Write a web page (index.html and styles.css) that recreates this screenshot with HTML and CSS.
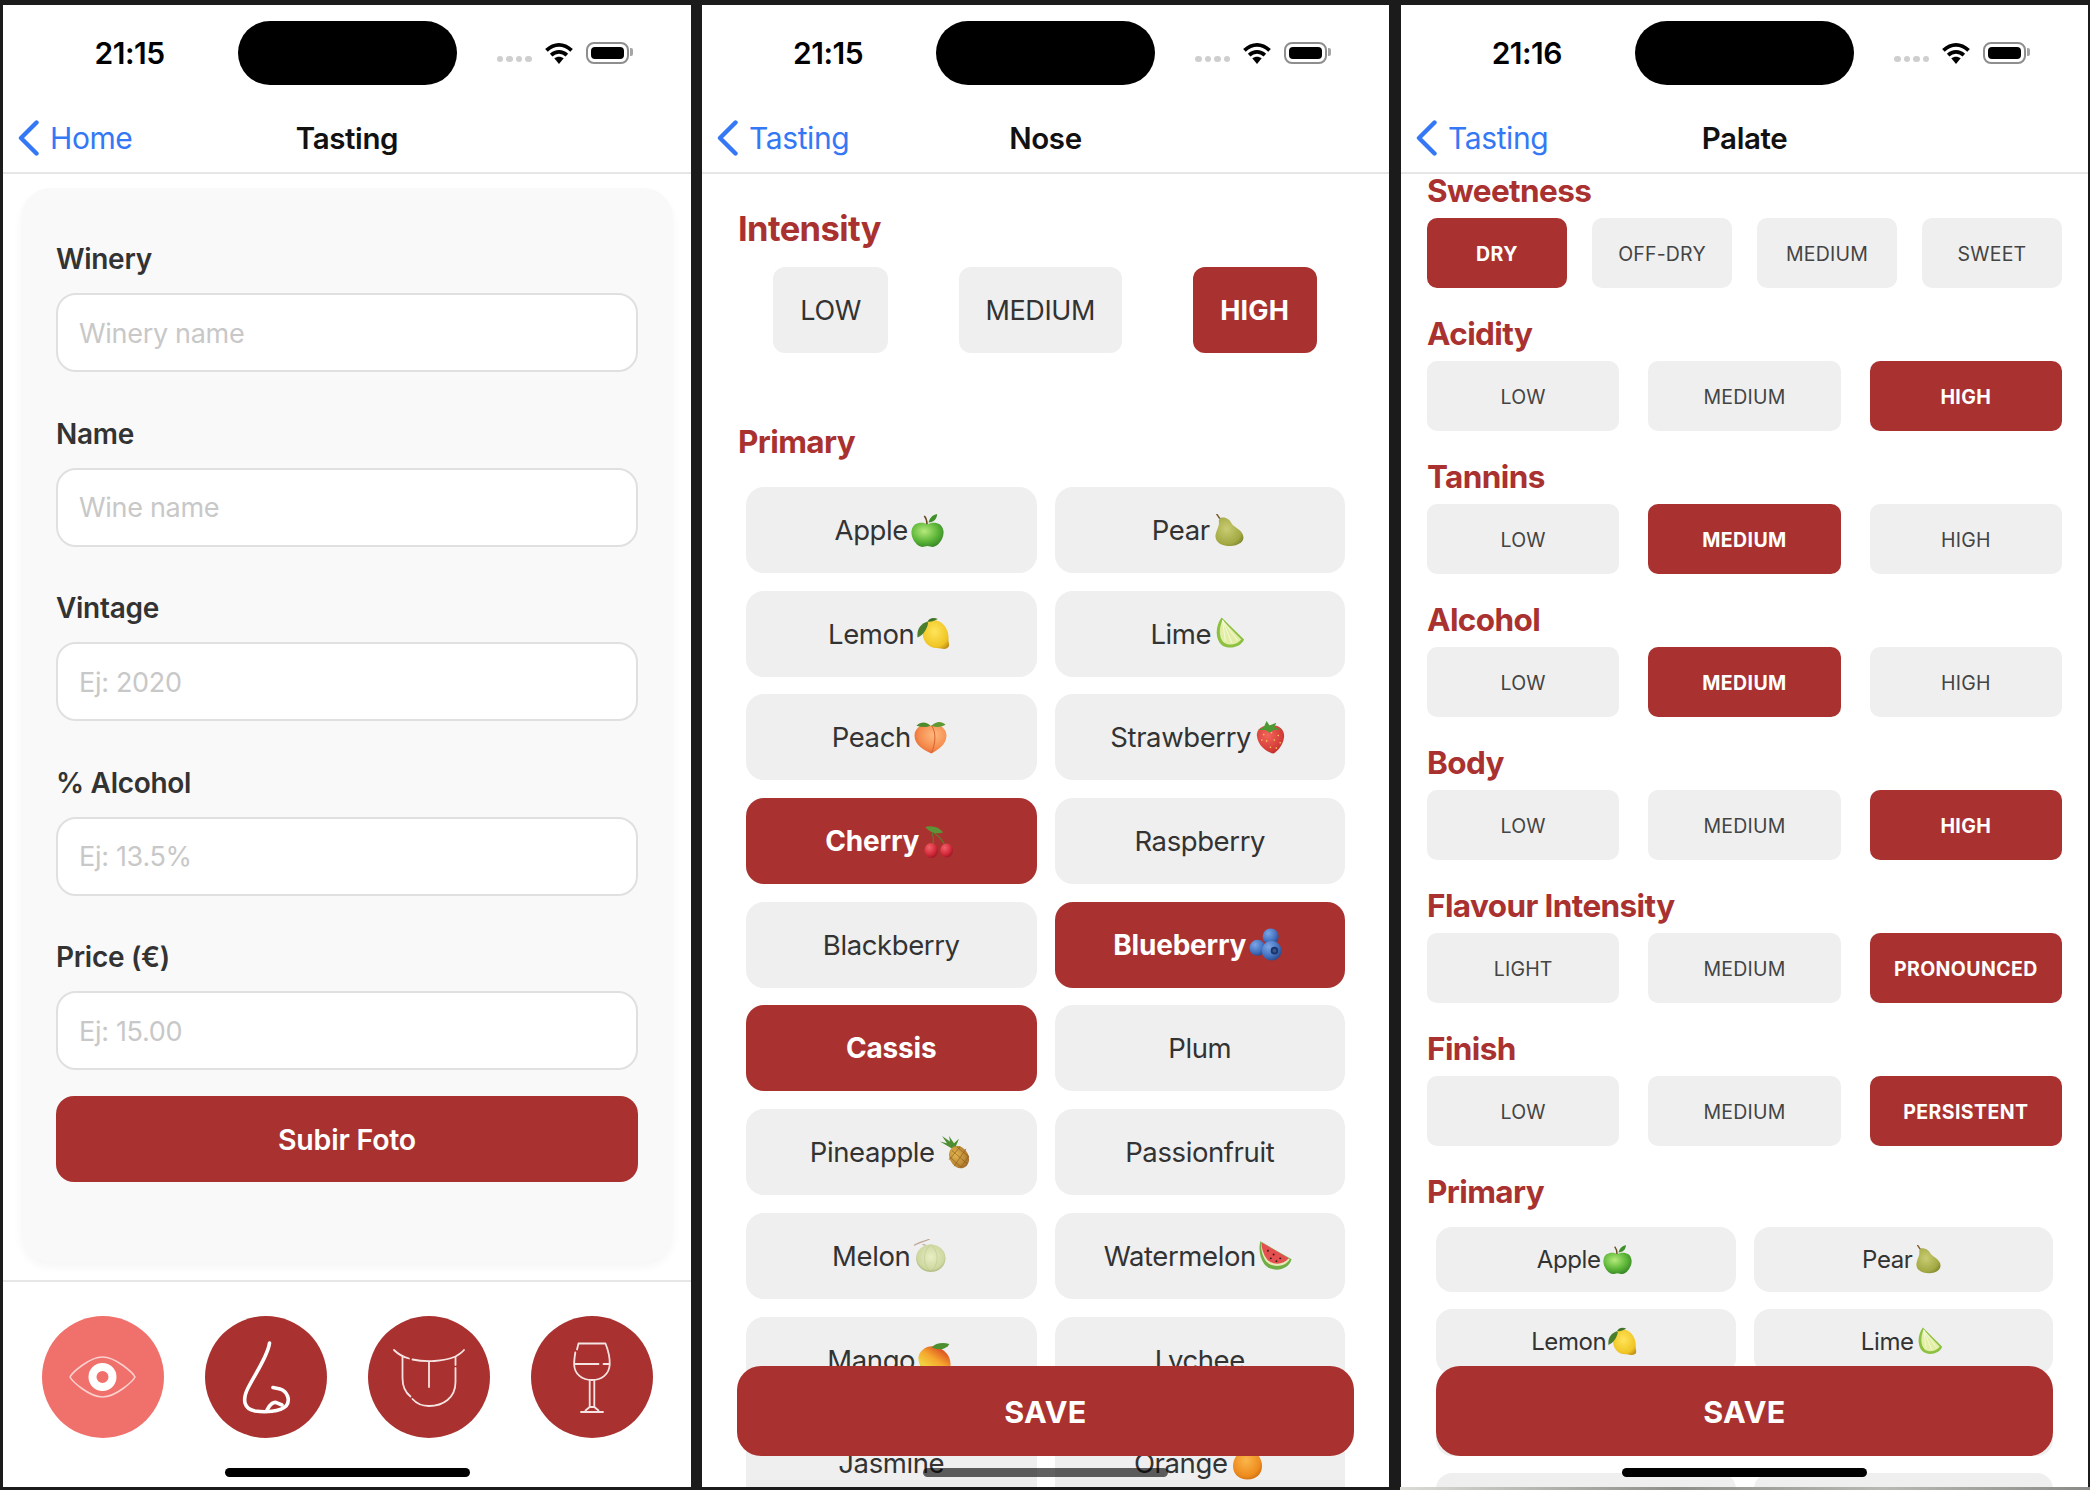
FILE: index.html
```html
<!DOCTYPE html>
<html lang="en">
<head>
<meta charset="utf-8">
<title>Wine tasting</title>
<link rel="stylesheet" href="styles.css">
</head>
<body>
<svg class="defs" aria-hidden="true">
  <defs>
    <radialGradient id="gApple" cx=".4" cy=".35" r=".75"><stop offset="0" stop-color="#b7ea7c"/><stop offset=".55" stop-color="#5fb83a"/><stop offset="1" stop-color="#2f7d22"/></radialGradient>
    <radialGradient id="gPear" cx=".4" cy=".4" r=".75"><stop offset="0" stop-color="#c9cc72"/><stop offset=".7" stop-color="#a3a944"/><stop offset="1" stop-color="#757d24"/></radialGradient>
    <radialGradient id="gLemon" cx=".45" cy=".4" r=".7"><stop offset="0" stop-color="#ffe45a"/><stop offset=".75" stop-color="#f0c524"/><stop offset="1" stop-color="#c4921a"/></radialGradient>
    <radialGradient id="gPeach" cx=".6" cy=".35" r=".8"><stop offset="0" stop-color="#ffb97f"/><stop offset=".6" stop-color="#f58a4c"/><stop offset="1" stop-color="#d9532a"/></radialGradient>
    <radialGradient id="gStraw" cx=".4" cy=".35" r=".8"><stop offset="0" stop-color="#f2655a"/><stop offset=".7" stop-color="#d23a36"/><stop offset="1" stop-color="#a5211f"/></radialGradient>
    <radialGradient id="gCherry" cx=".35" cy=".3" r=".8"><stop offset="0" stop-color="#f2606a"/><stop offset=".6" stop-color="#d32a3a"/><stop offset="1" stop-color="#8f1322"/></radialGradient>
    <radialGradient id="gBlue" cx=".35" cy=".3" r=".8"><stop offset="0" stop-color="#7ba6e6"/><stop offset=".6" stop-color="#4472c0"/><stop offset="1" stop-color="#24427f"/></radialGradient>
    <radialGradient id="gPine" cx=".4" cy=".35" r=".8"><stop offset="0" stop-color="#e4b64f"/><stop offset=".7" stop-color="#b5802f"/><stop offset="1" stop-color="#7a5019"/></radialGradient>
    <radialGradient id="gMelon" cx=".5" cy=".45" r=".6"><stop offset="0" stop-color="#e9eec4"/><stop offset=".75" stop-color="#ced8a0"/><stop offset="1" stop-color="#9aa96e"/></radialGradient>
    <linearGradient id="gMango" x1=".85" y1=".1" x2=".2" y2=".95"><stop offset="0" stop-color="#d8421f"/><stop offset=".45" stop-color="#f5a62e"/><stop offset=".8" stop-color="#f2d23e"/><stop offset="1" stop-color="#a2b23a"/></linearGradient>
    <radialGradient id="gOrange" cx=".45" cy=".4" r=".7"><stop offset="0" stop-color="#fbb64a"/><stop offset=".7" stop-color="#ee8c1f"/><stop offset="1" stop-color="#c2620e"/></radialGradient>

    <symbol id="e-apple" viewBox="2.500 0 31 35" preserveAspectRatio="none">
      <path d="M18 11C22 8 32 8 33 18 34 27 27 35 23 35 21 35 20 34 18 34 16 34 15 35 13 35 9 35 2 27 3 18 4 8 14 8 18 11Z" fill="url(#gApple)"/>
      <path d="M17.500 11C17.500 7 16.500 4 15 2" fill="none" stroke="#6a4a20" stroke-width="1.500"/>
      <path d="M19 9C20 4 23 1 27 0 27 5 24 9 19 9Z" fill="#3f8f2a"/>
    </symbol>
    <symbol id="e-pear" viewBox="6.500 1 27 35" preserveAspectRatio="none">
      <path d="M12 5C17 4 20 7 22 11 24 15 33 18 33 26 33 32 26 35 21 35 13 35 6 31 7 23 8 17 11 13 10 9 10 7 11 5 12 5Z" fill="url(#gPear)"/>
      <path d="M11 6 8 1" fill="none" stroke="#7d5a2a" stroke-width="1.500"/>
    </symbol>
    <symbol id="e-lemon" viewBox="3.500 1 31 34" preserveAspectRatio="none">
      <path d="M20 4C28 5 34 14 33 24 33 28 35 31 32 33 29 35 26 33 22 33 13 33 8 24 9 16 10 9 14 4 20 4Z" fill="url(#gLemon)"/>
      <path d="M13 6C7 8 3 14 4 22 9 20 13 14 14 7Z" fill="#4a7d2c"/>
      <path d="M13 6C15 2 19 1 23 3 20 5 16 6 13 6Z" fill="#3f7326"/>
    </symbol>
    <symbol id="e-lime" viewBox="4 0.500 31 36" preserveAspectRatio="none">
      <path d="M10 1 34 25C31 33 18 37 10 31 3 25 3 10 10 1Z" fill="#8cc040"/>
      <path d="M11 4 31 25C27 30 18 33 12 28 7 23 7 12 11 4Z" fill="#e2eea6"/>
      <path d="M11 4 14 27M11 4 21 29M11 4 27 26" fill="none" stroke="#f6fadb" stroke-width="1"/>
    </symbol>
    <symbol id="e-peach" viewBox="1.500 1 33 35.500" preserveAspectRatio="none">
      <path d="M18 6C24 3 34 7 34 17 34 27 24 33 19 36 12 33 2 27 2 17 2 7 12 3 18 6Z" fill="url(#gPeach)"/>
      <path d="M19 6C24 13 23 26 19 35" fill="none" stroke="#d2602f" stroke-width="1"/>
      <path d="M18 6C13 1 8 2 4 6 9 8 14 8 18 6Z" fill="#4f8a2c"/>
      <path d="M19 6C24 1 29 1 33 5 28 8 23 8 19 6Z" fill="#5e9a34"/>
    </symbol>
    <symbol id="e-strawberry" viewBox="4 0 30 36.500" preserveAspectRatio="none">
      <path d="M18 5C27 3 34 9 33 18 32 27 26 34 22 36 15 35 6 27 5 17 4 10 10 4 18 5Z" fill="url(#gStraw)"/>
      <g fill="#f2c85a"><circle cx="12" cy="15" r=".9"/><circle cx="20" cy="13" r=".9"/><circle cx="27" cy="16" r=".9"/><circle cx="15" cy="22" r=".9"/><circle cx="23" cy="21" r=".9"/><circle cx="29" cy="24" r=".9"/><circle cx="19" cy="29" r=".9"/><circle cx="25" cy="30" r=".9"/><circle cx="10" cy="21" r=".9"/></g>
      <path d="M6 10 12 7 15 0 18 5 25 2 23 7 30 9 22 10 18 13 14 10Z" fill="#4c9a34"/>
    </symbol>
    <symbol id="e-cherry" viewBox="0.500 0 34 35" preserveAspectRatio="none">
      <path d="M10 8C12 14 12 19 10 24M12 8C18 12 24 17 26 24" fill="none" stroke="#5f7d2c" stroke-width="1.300"/>
      <path d="M2 2C10 0 18 2 23 8 15 10 7 8 2 2Z" fill="#5d9438"/>
      <circle cx="9" cy="27" r="8" fill="url(#gCherry)"/>
      <circle cx="27" cy="27" r="7.500" fill="url(#gCherry)"/>
    </symbol>
    <symbol id="e-blueberry" viewBox="0 0 35 35">
      <circle cx="23" cy="9" r="8.500" fill="url(#gBlue)"/>
      <circle cx="9" cy="21" r="8.500" fill="url(#gBlue)"/>
      <circle cx="24" cy="24" r="10.500" fill="url(#gBlue)"/>
      <circle cx="27" cy="24" r="4" fill="#1d3568"/>
      <circle cx="27" cy="24" r="2" fill="#38578f"/>
    </symbol>
    <symbol id="e-pineapple" viewBox="3 0 29 36" preserveAspectRatio="none">
      <path d="M14 13 3 6 10 8 5 0 13 6 12 0 17 8 22 3 19 11 24 11 18 15Z" fill="#4f8d33"/>
      <ellipse cx="22" cy="23" rx="9.500" ry="12.500" transform="rotate(-22 22 23)" fill="url(#gPine)"/>
      <path d="M15 16 30 30M13 23 24 34M20 12 32 23M29 14 17 33M23 12 12 26M33 20 24 34" fill="none" stroke="#8a5c20" stroke-width=".7"/>
    </symbol>
    <symbol id="e-melon" viewBox="3 0 31.500 36" preserveAspectRatio="none">
      <ellipse cx="20" cy="21" rx="14" ry="15" fill="url(#gMelon)"/>
      <path d="M4 7C8 4 13 3 19 0M12 6C14 6 15 7 15 7" fill="none" stroke="#c0a896" stroke-width="1.300"/>
      <path d="M20 6C12 14 12 28 20 36M20 6C28 14 28 28 20 36" fill="none" stroke="#bcc78f" stroke-width=".6"/>
    </symbol>
    <symbol id="e-watermelon" viewBox="1.500 2 35 32">
      <path d="M3 3 36 22C33 34 15 37 7 27 2 20 1 10 3 3Z" fill="#6fae45"/>
      <path d="M4 4 34 22C30 30 16 32 9 24 5 19 3 10 4 4Z" fill="#e8e8b6"/>
      <path d="M4 4 33 21C28 28 16 29 10 22 6 17 4 10 4 4Z" fill="#e4504f"/>
      <g fill="#2a1c18"><circle cx="11" cy="13" r="1"/><circle cx="17" cy="17" r="1"/><circle cx="24" cy="21" r="1"/><circle cx="14" cy="21" r="1"/><circle cx="20" cy="24" r="1"/></g>
    </symbol>
    <symbol id="e-mango" viewBox="4.500 0 30 36" preserveAspectRatio="none">
      <path d="M20 4C29 6 35 15 34 25 33 32 27 36 21 35 11 34 4 25 5 15 6 8 13 2 20 4Z" fill="url(#gMango)"/>
      <path d="M17 5C20 0 27-1 33 1 31 6 24 9 17 5Z" fill="#4c8f30"/>
    </symbol>
    <symbol id="e-orange" viewBox="3 1.500 30 34" preserveAspectRatio="none">
      <path d="M18 2C27 5 33 13 33 21 33 29 27 35 18 35 9 35 3 29 3 21 3 13 9 5 18 2Z" fill="url(#gOrange)"/>
      <circle cx="18" cy="4" r="1.500" fill="#7a5a1a"/>
    </symbol>

    <symbol id="i-wifi" viewBox="0 0 28 21">
      <path d="M2 8C9.500 1 18.500 1 26 8M6.500 12.500C11 8.500 17 8.500 21.500 12.500" fill="none" stroke="#000" stroke-width="3.600"/>
      <path d="M9.500 15.500C12 13.500 16 13.500 18.500 15.500L14 21Z" fill="#000"/>
    </symbol>
    <symbol id="i-back" viewBox="0 0 21 36">
      <path d="M18.500 2.500 3 18 18.500 33.500" fill="none" stroke="#3478f6" stroke-width="4.400" stroke-linecap="round" stroke-linejoin="round"/>
    </symbol>
  </defs>
</svg>

<main class="screens">

  <section class="phone">
    <header class="status">
      <div class="status-left"><span class="time">21:15</span></div>
      <div class="island"></div>
      <div class="status-right">
        <span class="signal"><i></i><i></i><i></i><i></i></span>
        <svg class="wifi"><use href="#i-wifi"/></svg>
        <span class="battery"><span class="battery-fill"></span></span>
      </div>
    </header>
    <nav class="nav">
      <a class="back"><svg class="chevron"><use href="#i-back"/></svg>Home</a>
      <h1 class="title">Tasting</h1>
    </nav>
    <div class="card">
      <div class="field"><label class="field-label">Winery</label><input class="input" placeholder="Winery name"></div>
      <div class="field"><label class="field-label">Name</label><input class="input" placeholder="Wine name"></div>
      <div class="field"><label class="field-label">Vintage</label><input class="input" placeholder="Ej: 2020"></div>
      <div class="field"><label class="field-label">% Alcohol</label><input class="input" placeholder="Ej: 13.5%"></div>
      <div class="field field-last"><label class="field-label">Price (€)</label><input class="input" placeholder="Ej: 15.00"></div>
      <button class="upload">Subir Foto</button>
    </div>
    <footer class="tabs">
      <div class="tab tab-active">
        <svg viewBox="0 0 122 122" class="tab-icon">
          <path d="M28 61C30 57 47 41 60.500 41S91 57 93 61C91 65 74 81 60.500 81S30 65 28 61Z" fill="none" stroke="#fbd0cd" stroke-width="1.600"/>
          <circle cx="60.500" cy="61" r="10" fill="none" stroke="#fff" stroke-width="8"/>
        </svg>
      </div>
      <div class="tab">
        <svg viewBox="0 0 122 122" class="tab-icon">
          <path d="M64.500 27C63 40 50 58 43 72 37 84 39 93 50 95 60 96.500 75 96 81 90 86 84 82 75 75 73L68 71.500" fill="none" stroke="#fff" stroke-width="3.600" stroke-linecap="round"/>
          <path d="M62 94C65 88 69 85 72 87L77 89" fill="none" stroke="#fff" stroke-width="3.600" stroke-linecap="round"/>
        </svg>
      </div>
      <div class="tab">
        <svg viewBox="0 0 122 122" class="tab-icon">
          <g fill="none" stroke="#f6e4e2" stroke-width="1.800" stroke-linecap="round">
            <path d="M26 34C30 38 35 41 41 42.500"/>
            <path d="M44.500 43.500C58 46.500 75 45.500 87.500 40.500 91 38.500 94 36.500 96 34"/>
            <path d="M34.500 40.500V62C34.500 70 38 77 42.500 80.500"/>
            <path d="M44.500 83C48 87 54 90 61 90 75 90 87.500 82 87.500 66V52"/>
            <path d="M87.500 49V41"/>
            <path d="M61 46V71"/>
          </g>
        </svg>
      </div>
      <div class="tab">
        <svg viewBox="0 0 122 122" class="tab-icon">
          <g fill="none" stroke="#f6e4e2" stroke-width="1.800" stroke-linecap="round" stroke-linejoin="round">
            <path d="M46 33.500 47.500 27.500H74.500C77.500 35 79 43 78.700 49 78 58 71 64 61 64 51 64 43.500 58 43.200 49 43 45 43.600 41 44.300 36.500"/>
            <path d="M44.500 48H67.500M72.500 48H78"/>
            <path d="M58.700 64V91M63.300 64V91"/>
            <path d="M50 96H72M54.500 94.500 58.700 91H63.300L67.500 94.500"/>
          </g>
        </svg>
      </div>
    </footer>
    <div class="home-bar"></div>
  </section>

  <section class="phone">
    <header class="status">
      <div class="status-left"><span class="time">21:15</span></div>
      <div class="island"></div>
      <div class="status-right">
        <span class="signal"><i></i><i></i><i></i><i></i></span>
        <svg class="wifi"><use href="#i-wifi"/></svg>
        <span class="battery"><span class="battery-fill"></span></span>
      </div>
    </header>
    <nav class="nav">
      <a class="back"><svg class="chevron"><use href="#i-back"/></svg>Tasting</a>
      <h1 class="title">Nose</h1>
    </nav>
    <div class="nose">
      <h2 class="section section-intensity">Intensity</h2>
      <div class="intensity">
        <button class="level">LOW</button>
        <button class="level">MEDIUM</button>
        <button class="level on">HIGH</button>
      </div>
      <h2 class="section section-primary">Primary</h2>
      <div class="notes">
        <button class="note">Apple<svg class="emoji"><use href="#e-apple"/></svg></button>
        <button class="note">Pear<svg class="emoji emoji-slim"><use href="#e-pear"/></svg></button>
        <button class="note">Lemon<svg class="emoji"><use href="#e-lemon"/></svg></button>
        <button class="note">Lime<svg class="emoji emoji-slim"><use href="#e-lime"/></svg></button>
        <button class="note">Peach<svg class="emoji"><use href="#e-peach"/></svg></button>
        <button class="note">Strawberry<svg class="emoji emoji-slim"><use href="#e-strawberry"/></svg></button>
        <button class="note on">Cherry<svg class="emoji emoji-slim"><use href="#e-cherry"/></svg></button>
        <button class="note">Raspberry</button>
        <button class="note">Blackberry</button>
        <button class="note on">Blueberry<svg class="emoji"><use href="#e-blueberry"/></svg></button>
        <button class="note on">Cassis</button>
        <button class="note">Plum</button>
        <button class="note">Pineapple<svg class="emoji emoji-slim"><use href="#e-pineapple"/></svg></button>
        <button class="note">Passionfruit</button>
        <button class="note">Melon<svg class="emoji"><use href="#e-melon"/></svg></button>
        <button class="note">Watermelon<svg class="emoji"><use href="#e-watermelon"/></svg></button>
        <button class="note">Mango<svg class="emoji"><use href="#e-mango"/></svg></button>
        <button class="note">Lychee</button>
        <button class="note">Jasmine</button>
        <button class="note">Orange<svg class="emoji emoji-slim"><use href="#e-orange"/></svg></button>
      </div>
    </div>
    <button class="save">SAVE</button>
    <div class="home-bar home-bar-soft"></div>
  </section>

  <section class="phone phone-last">
    <header class="status">
      <div class="status-left"><span class="time">21:16</span></div>
      <div class="island"></div>
      <div class="status-right">
        <span class="signal"><i></i><i></i><i></i><i></i></span>
        <svg class="wifi"><use href="#i-wifi"/></svg>
        <span class="battery"><span class="battery-fill"></span></span>
      </div>
    </header>
    <nav class="nav">
      <a class="back"><svg class="chevron"><use href="#i-back"/></svg>Tasting</a>
      <h1 class="title">Palate</h1>
    </nav>
    <div class="palate">
      <div class="group">
        <h2 class="section">Sweetness</h2>
        <div class="choices choices-four">
          <button class="choice on">DRY</button><button class="choice">OFF-DRY</button><button class="choice">MEDIUM</button><button class="choice">SWEET</button>
        </div>
      </div>
      <div class="group">
        <h2 class="section">Acidity</h2>
        <div class="choices">
          <button class="choice">LOW</button><button class="choice">MEDIUM</button><button class="choice on">HIGH</button>
        </div>
      </div>
      <div class="group">
        <h2 class="section">Tannins</h2>
        <div class="choices">
          <button class="choice">LOW</button><button class="choice on">MEDIUM</button><button class="choice">HIGH</button>
        </div>
      </div>
      <div class="group">
        <h2 class="section">Alcohol</h2>
        <div class="choices">
          <button class="choice">LOW</button><button class="choice on">MEDIUM</button><button class="choice">HIGH</button>
        </div>
      </div>
      <div class="group">
        <h2 class="section">Body</h2>
        <div class="choices">
          <button class="choice">LOW</button><button class="choice">MEDIUM</button><button class="choice on">HIGH</button>
        </div>
      </div>
      <div class="group">
        <h2 class="section">Flavour Intensity</h2>
        <div class="choices">
          <button class="choice">LIGHT</button><button class="choice">MEDIUM</button><button class="choice on">PRONOUNCED</button>
        </div>
      </div>
      <div class="group">
        <h2 class="section">Finish</h2>
        <div class="choices">
          <button class="choice">LOW</button><button class="choice">MEDIUM</button><button class="choice on">PERSISTENT</button>
        </div>
      </div>
      <div class="group">
        <h2 class="section">Primary</h2>
        <div class="notes notes-small">
          <button class="note">Apple<svg class="emoji"><use href="#e-apple"/></svg></button>
          <button class="note">Pear<svg class="emoji emoji-slim"><use href="#e-pear"/></svg></button>
          <button class="note">Lemon<svg class="emoji"><use href="#e-lemon"/></svg></button>
          <button class="note">Lime<svg class="emoji emoji-slim"><use href="#e-lime"/></svg></button>
          <button class="note"></button>
          <button class="note"></button>
          <button class="note"></button>
          <button class="note"></button>
        </div>
      </div>
    </div>
    <button class="save">SAVE</button>
    <div class="home-bar"></div>
  </section>

</main>
<div class="capture-edge"></div>
</body>
</html>
```

FILE: styles.css
```css
* { box-sizing: border-box; }

html, body {
  margin: 0;
  height: 1490px;
  overflow: hidden;
  background: #1b1b1b;
}

body {
  font-family: Inter, "Liberation Sans", sans-serif;
  color: #333;
}

.defs { display: block; width: 0; height: 0; }

.screens {
  display: flex;
  gap: 11px;
  height: 1487px;
  padding: 5px 0 0 3px;
  background: #1b1b1b;
}

.phone {
  position: relative;
  display: flex;
  flex-direction: column;
  flex: none;
  width: 687px;
  height: 1482px;
  background: #fff;
  overflow: hidden;
}

.phone:first-child { width: 688px; }
.phone-last { margin-left: 1px; }

/* Status bar */
.status {
  display: grid;
  grid-template-columns: 1fr 219px 1fr;
  align-items: center;
  height: 96px;
  flex: none;
}

.status-left {
  display: flex;
  justify-content: flex-end;
  padding-right: 73px;
}

.time {
  font-size: 30px;
  font-weight: 600;
  letter-spacing: -0.5px;
  color: #000;
  line-height: 34px;
}

.island {
  height: 64px;
  border-radius: 32px;
  background: #000;
}

.status-right {
  display: flex;
  align-items: center;
  padding-left: 40px;
}

.signal {
  display: flex;
  gap: 3px;
  margin-top: 12px;
}

.signal i {
  width: 6.500px;
  height: 6.500px;
  border-radius: 50%;
  background: #cfcfcf;
}

.wifi {
  width: 30px;
  height: 22px;
  margin-left: 12px;
}

.battery {
  position: relative;
  display: block;
  width: 43px;
  height: 22px;
  margin-left: 12px;
  padding: 3px;
  border: 2px solid #8e8e8e;
  border-radius: 8px;
}

.battery::after {
  content: "";
  position: absolute;
  left: 42px;
  top: 4px;
  width: 3px;
  height: 8px;
  border-radius: 0 2px 2px 0;
  background: #a5a5a5;
}

.battery-fill {
  display: block;
  height: 100%;
  border-radius: 4px;
  background: #000;
}

/* Nav */
.nav {
  display: grid;
  grid-template-columns: 1fr auto 1fr;
  align-items: center;
  flex: none;
  height: 73px;
  padding: 2px 15px 0;
  border-bottom: 2px solid #e6e6e6;
}

.back {
  display: flex;
  align-items: center;
  gap: 11px;
  font-size: 30px;
  letter-spacing: -0.400px;
  color: #3478f6;
}

.chevron {
  width: 21px;
  height: 36px;
  flex: none;
}

.title {
  margin: 0;
  font-size: 29.500px;
  font-weight: 600;
  letter-spacing: -0.400px;
  color: #111;
}

/* Tasting form */
.card {
  flex: none;
  height: 1074px;
  margin: 14px 18px 0;
  padding: 56px 35px 0;
  border-radius: 30px;
  background: #f9f9f9;
  box-shadow: 0 5px 10px rgba(0, 0, 0, 0.04);
}

.field { margin-bottom: 46.500px; }
.field-last { margin-bottom: 26px; }

.field-label {
  display: block;
  margin-bottom: 19px;
  font-size: 28px;
  font-weight: 600;
  line-height: 30px;
  letter-spacing: -0.300px;
  color: #333;
}

.input {
  display: block;
  width: 100%;
  height: 79px;
  padding: 1px 21px 0;
  border: 2px solid #e0e0e0;
  border-radius: 20px;
  background: #fff;
  font: 400 27px Inter, "Liberation Sans", sans-serif;
  letter-spacing: -0.300px;
  color: #333;
}

.input::placeholder { color: #c8c8c8; opacity: 1; }

.upload {
  display: block;
  width: 100%;
  height: 86px;
  border: 0;
  border-radius: 18px;
  background: #a93230;
  color: #fff;
  font: 600 28.500px Inter, "Liberation Sans", sans-serif;
  letter-spacing: -0.200px;
}

/* Tab bar */
.tabs {
  display: flex;
  justify-content: space-between;
  flex: none;
  margin-top: 18px;
  padding: 34px 38px 0 39px;
  border-top: 2px solid #e6e6e6;
}

.tab {
  width: 122px;
  height: 122px;
  border-radius: 50%;
  background: #a93230;
}

.tab-active { background: #f0706b; }

.tab-icon {
  display: block;
  width: 122px;
  height: 122px;
}

.home-bar {
  position: absolute;
  left: 50%;
  bottom: 10px;
  width: 245px;
  height: 9px;
  margin-left: -122.500px;
  border-radius: 5px;
  background: #000;
  z-index: 3;
}

.home-bar-soft { background: rgba(0, 0, 0, 0.62); }

/* Section headings */
.section {
  margin: 0;
  font-size: 31.500px;
  font-weight: 700;
  line-height: 34px;
  letter-spacing: -0.600px;
  color: #a93230;
}

/* Nose */
.nose {
  flex: 1;
  min-height: 0;
  overflow: hidden;
  padding: 38px 36px 0;
}

.section-intensity {
  margin-bottom: 21px;
  font-size: 34.500px;
}

.section-primary { margin: 72px 0 28px; }

.intensity {
  display: flex;
  justify-content: space-around;
  width: 614px;
}

.level {
  height: 86px;
  padding: 0 27px;
  border: 0;
  border-radius: 12px;
  background: #efefef;
  color: #333;
  font: 400 27px Inter, "Liberation Sans", sans-serif;
  letter-spacing: -0.400px;
}

.level.on {
  padding: 0 27.500px;
  background: #a93230;
  color: #fff;
  font-weight: 700;
  letter-spacing: 0.200px;
}

.notes {
  display: grid;
  grid-template-columns: 1fr 1fr;
  gap: 17.700px 18px;
  margin: 0 8px;
}

.note {
  display: flex;
  align-items: center;
  justify-content: center;
  height: 86px;
  padding: 0;
  border: 0;
  border-radius: 18px;
  background: #efefef;
  color: #333;
  font: 400 27.500px Inter, "Liberation Sans", sans-serif;
  letter-spacing: -0.400px;
}

.note.on {
  background: #a93230;
  color: #fff;
  font-size: 28px;
  font-weight: 700;
  letter-spacing: -0.200px;
}

.emoji {
  flex: none;
  width: 33px;
  height: 33px;
  margin: 0 4px 0 3px;
}

.emoji-slim { width: 29px; margin-left: 5px; }

/* Palate */
.palate {
  flex: 1;
  min-height: 0;
  padding: 1px 26px 0;
}

.group { margin-bottom: 30px; }

.group .section {
  line-height: 31px;
  margin-bottom: 12px;
}

.choices {
  display: flex;
  gap: 29px;
}

.choices-four { gap: 25px; }

.choice {
  flex: 1 1 0;
  min-width: 0;
  height: 70px;
  padding: 1px 0 0;
  border: 0;
  border-radius: 10px;
  background: #efefef;
  color: #444;
  font: 400 19.500px Inter, "Liberation Sans", sans-serif;
  letter-spacing: 0.200px;
}

.choice.on {
  background: #a93230;
  color: #fff;
  font-weight: 700;
  letter-spacing: 0.400px;
}

.notes-small {
  gap: 17px 18px;
  margin: 20px 9px 0;
}

.notes-small .note {
  height: 65px;
  font-size: 24px;
  border-radius: 16px;
}

.notes-small .emoji { width: 29px; height: 29px; margin: 0 3px 0 2px; }
.notes-small .emoji-slim { width: 25px; margin-left: 4px; }

/* Save */
.save {
  position: absolute;
  left: 35px;
  right: 35px;
  top: 1361px;
  height: 90px;
  border: 0;
  border-radius: 24px;
  background: #a93230;
  color: #fff;
  font: 700 30.500px Inter, "Liberation Sans", sans-serif;
  letter-spacing: 0.300px;
  z-index: 2;
}

/* Bottom edge of the third capture */
.capture-edge {
  height: 3px;
  margin-left: 1400px;
  background: linear-gradient(90deg, #dcdcd6, #8f8f8a 40%, #b9b9b4 70%, #8a8a86);
}
```
